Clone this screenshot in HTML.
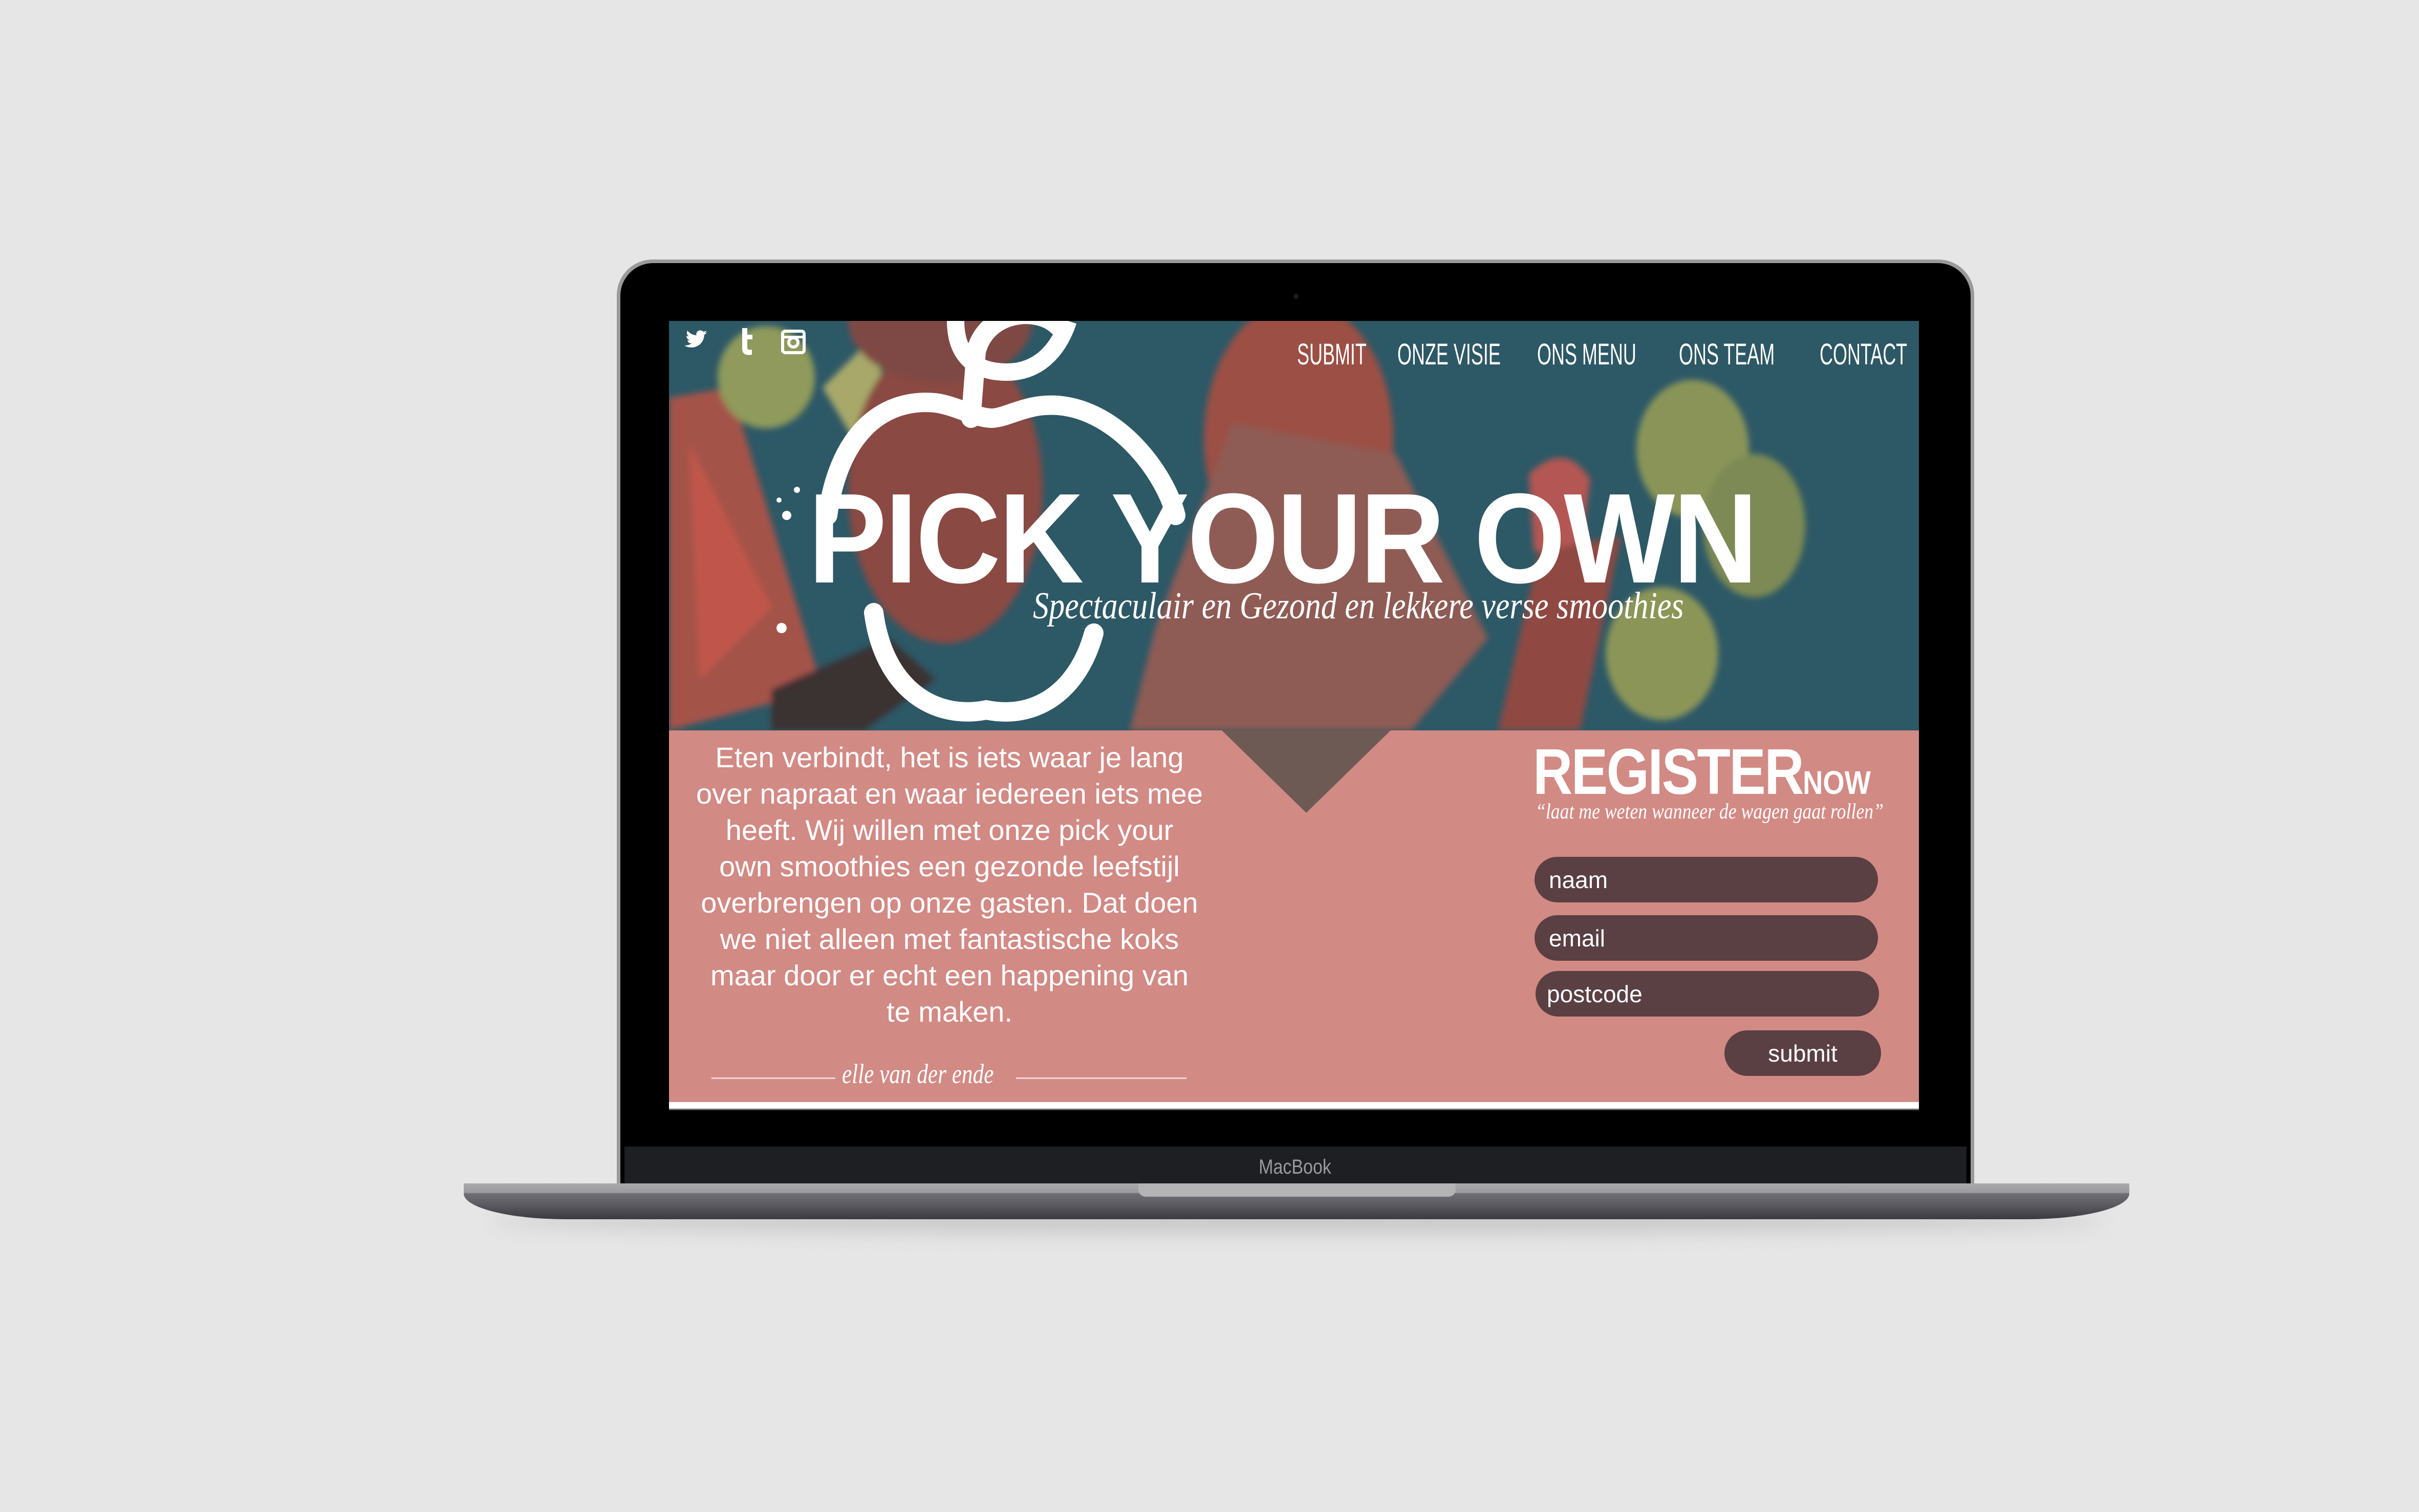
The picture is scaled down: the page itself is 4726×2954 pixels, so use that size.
<!DOCTYPE html>
<html><head><meta charset="utf-8"><style>
*{margin:0;padding:0;box-sizing:border-box}
body{width:4726px;height:2954px;background:#e6e6e6;position:relative;overflow:hidden;font-family:"Liberation Sans",sans-serif}
.abs{position:absolute}
.nav{position:absolute;top:32px;color:#fff;font-size:58px;transform:scaleX(0.62);transform-origin:left top;white-space:nowrap;font-weight:400}
.para{position:absolute;left:0;width:1096px;text-align:center;color:#fff;font-size:56px;line-height:71px;top:817px;letter-spacing:0px;transform:scaleX(1.0);transform-origin:center top}
.inp{position:absolute;background:#5a3f43;border-radius:50px;color:#fff;font-size:46px;padding-left:28px;display:flex;align-items:center}
.script{font-family:"Liberation Serif",serif;font-style:italic;color:#fff}
</style></head><body>
<div class="abs" style="left:960px;top:2360px;width:3150px;height:50px;background:#c8c8c8;filter:blur(18px);border-radius:50%"></div>
<div class="abs" style="left:1205px;top:507px;width:2652px;height:1810px;background:#9a9a9c;border-radius:70px 70px 0 0"></div>
<div class="abs" style="left:1212px;top:514px;width:2638px;height:1800px;background:#000;border-radius:64px 64px 0 0"></div>
<div class="abs" style="left:2527px;top:574px;width:10px;height:10px;border-radius:50%;background:#1b1b1b"></div>
<div class="abs" style="left:1220px;top:2240px;width:2622px;height:72px;background:#1e1f22"></div>
<div class="abs" style="left:2400px;top:2258px;width:260px;text-align:center;color:#9a9a9e;font-size:40px;transform:scaleX(0.85)">MacBook</div>
<div class="abs" style="left:906px;top:2312px;width:3254px;height:70px;background:linear-gradient(#a9a9ad 0,#9c9ca0 18px,#6e6e74 20px,#5d5d63 40px,#3a3a40 70px);border-radius:0 0 200px 200px/0 0 50px 50px"></div>
<div class="abs" style="left:2224px;top:2312px;width:620px;height:26px;background:#b4b4b7;border-radius:0 0 14px 14px"></div>
<div class="abs" style="left:1307px;top:627px;width:2442px;height:1542px;background:#fff;overflow:hidden">
 <div class="abs" style="left:0;top:0;width:2442px;height:800px;background:#2d5866;overflow:hidden">
  <svg width="2442" height="800" style="position:absolute;left:0;top:0">
   <defs><filter id="b"><feGaussianBlur stdDeviation="6"/></filter></defs>
   <g filter="url(#b)">
    <path d="M0 150 L120 130 L300 720 L0 800Z" fill="#a4524a"/>
    <path d="M40 240 L200 560 L60 700Z" fill="#c0564b"/>
    <ellipse cx="190" cy="110" rx="95" ry="100" fill="#8f9a5c"/>
    <path d="M300 130 L400 30 L430 180 L360 230Z" fill="#a7a86a"/>
    <ellipse cx="540" cy="330" rx="190" ry="300" fill="#8a4a42"/>
    <ellipse cx="1230" cy="230" rx="185" ry="270" fill="#9b4f45"/>
    <ellipse cx="530" cy="0" rx="180" ry="120" fill="#7e4a45"/>
    <path d="M950 600 L1100 200 L1420 260 L1600 620 L1450 800 L900 800Z" fill="#8e5b55"/>
    <path d="M1680 300 Q1750 230 1800 310 L1780 460 L1690 450Z" fill="#b45752"/>
    <ellipse cx="2000" cy="250" rx="110" ry="135" fill="#8a9459"/>
    <ellipse cx="2120" cy="400" rx="100" ry="140" fill="#7d8a55"/>
    <ellipse cx="1940" cy="650" rx="110" ry="130" fill="#8c9558"/>
    <path d="M1700 450 L1860 420 L1780 800 L1620 800Z" fill="#8f4a43"/>
    <path d="M200 720 L430 620 L520 700 L380 800 L200 800Z" fill="#3a3332"/>
   </g>
   <g fill="none" stroke="#fff" stroke-width="38" stroke-linecap="round">
    <path d="M310 380 C330 230 410 150 520 160 C560 165 600 190 630 190 C660 190 700 160 760 165 C880 175 970 300 990 380"/>
    <path d="M400 570 C420 720 520 780 620 760 C720 780 800 720 830 610"/>
    <path d="M590 190 L600 60 C620 -20 720 -30 760 10"/>
   </g>
   <path d="M560 0 C560 60 590 100 660 100 C720 100 760 60 780 0" fill="none" stroke="#fff" stroke-width="34"/>
   <circle cx="230" cy="380" r="9" fill="#fff"/><circle cx="250" cy="330" r="6" fill="#fff"/><circle cx="215" cy="350" r="5" fill="#fff"/><circle cx="220" cy="600" r="10" fill="#fff"/>
  </svg>
  <svg class="abs" style="left:25px;top:12px" width="260" height="60" viewBox="0 0 260 60">
   <path d="M50 10c-2 1-4 1.5-6 2 2-1 3.5-3 4-5-2 1-4 2-6 2-4-4-11-3-13 2-1 2-1 4 0 5-7 0-14-4-18-9-2 4-1 9 3 11-2 0-3 0-5-1 0 4 3 8 7 9-1 0-3 .5-5 0 1 4 4 6 8 6-4 3-9 4-14 4 17 10 38 0 39-21 2-1 4-3 6-5z" fill="#fff"/>
   <path d="M118 2h10v13h10v9h-10v16c0 4 3 5 9 4v10c-11 2-19-1-19-12z" fill="#fff"/>
   <rect x="197" y="8" width="42" height="42" rx="5" fill="none" stroke="#fff" stroke-width="6"/>
   <circle cx="218" cy="30" r="9" fill="none" stroke="#fff" stroke-width="6"/>
   <rect x="197" y="17" width="42" height="5" fill="#fff"/>
  </svg>
  <div class="nav" style="left:1227px">SUBMIT</div>
  <div class="nav" style="left:1423px">ONZE VISIE</div>
  <div class="nav" style="left:1696px">ONS MENU</div>
  <div class="nav" style="left:1973px">ONS TEAM</div>
  <div class="nav" style="left:2248px">CONTACT</div>
  <div class="abs" style="left:272px;top:300px;color:#fff;font-weight:700;font-size:250px;line-height:250px;white-space:nowrap;transform:scaleX(0.92);transform-origin:left top;letter-spacing:-4px">PICK YOUR OWN</div>
  <div class="abs script" style="left:711px;top:515px;font-size:74px;white-space:nowrap;transform:scaleX(0.84);transform-origin:left top">Spectaculair en Gezond en lekkere verse smoothies</div>
 </div>
 <div class="abs" style="left:0;top:800px;width:2442px;height:726px;background:#d28a84"></div>
 <svg class="abs" style="left:1080px;top:800px" width="340" height="165"><path d="M0 0 L330 0 L165 161Z" fill="#6e5a55"/></svg>
 <div class="para">Eten verbindt, het is iets waar je lang<br>over napraat en waar iedereen iets mee<br>heeft. Wij willen met onze pick your<br>own smoothies een gezonde leefstijl<br>overbrengen op onze gasten. Dat doen<br>we niet alleen met fantastische koks<br>maar door er echt een happening van<br>te maken.</div>
 <div class="abs" style="left:83px;top:1478px;width:242px;height:3px;background:#f1d8d5"></div>
 <div class="abs" style="left:678px;top:1478px;width:333px;height:3px;background:#f1d8d5"></div>
 <div class="abs script" style="left:338px;top:1440px;font-size:54px;white-space:nowrap;transform:scaleX(0.8);transform-origin:left top">elle van der ende</div>
 <div class="abs" style="left:1688px;top:818px;color:#fff;font-weight:700;font-size:126px;line-height:126px;white-space:nowrap;transform:scaleX(0.85);transform-origin:left top;letter-spacing:-3px">REGISTER<span style="font-size:64px;letter-spacing:0">NOW</span></div>
 <div class="abs script" style="left:1693px;top:935px;font-size:42px;white-space:nowrap;transform:scaleX(0.85);transform-origin:left top">“laat me weten wanneer de wagen gaat rollen”</div>
 <div class="inp" style="left:1691px;top:1047px;width:671px;height:89px">naam</div>
 <div class="inp" style="left:1691px;top:1161px;width:671px;height:89px">email</div>
 <div class="inp" style="left:1693px;top:1270px;width:671px;height:89px;padding-left:22px">postcode</div>
 <div class="inp" style="left:2062px;top:1386px;width:306px;height:89px;padding-left:0;justify-content:center">submit</div>
 <div class="abs" style="left:0;top:1526px;width:2442px;height:16px;background:#fff"></div>
</div>
<div class="abs" style="left:1307px;top:2166px;width:2442px;height:3px;background:#666"></div>
</body></html>
